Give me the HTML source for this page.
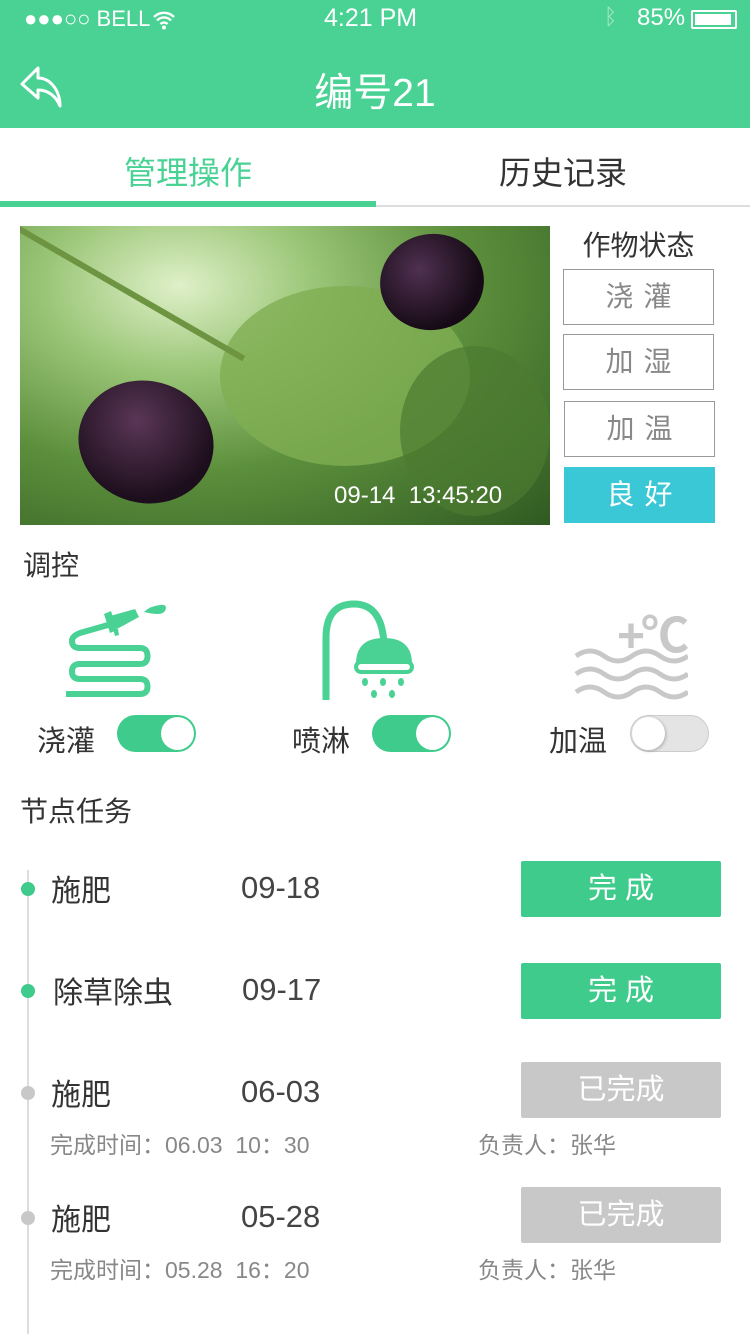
<!DOCTYPE html>
<html><head><meta charset="utf-8"><style>
*{margin:0;padding:0;box-sizing:border-box}
body{width:750px;height:1334px;background:#fff;position:relative;overflow:hidden;font-family:"Liberation Sans","Noto Sans CJK SC",sans-serif;color:#333}
.a{position:absolute;white-space:nowrap}
.hdr{position:absolute;left:0;top:0;width:750px;height:128px;background:#4ad295}
.btn{position:absolute;border:1px solid #999;color:#888;font-size:28px;text-align:center;letter-spacing:10px;text-indent:10px}
.tg{position:absolute;width:79px;height:37px;border-radius:19px;background:#3ecb8b}
.tg i{position:absolute;top:2px;width:33px;height:33px;border-radius:50%;background:#fff}
.gb{position:absolute;left:521px;width:200px;height:56px;background:#3ecb8b;color:#fff;font-size:29px;text-align:center;line-height:56px;letter-spacing:8px;text-indent:8px;border-radius:2px}
.gr{background:#c8c8c8;letter-spacing:0;text-indent:0}
.dot{position:absolute;left:21px;width:14px;height:14px;border-radius:50%}
.dt{font-size:31px;color:#444}
</style></head><body>
<div class="hdr"></div>
<div class="a" style="left:24px;top:6px;color:#fff;font-size:22px">●●●○○ BELL</div>
<svg class="a" style="left:152px;top:10px" width="24" height="20" viewBox="0 0 24 20"><path d="M2 7a14 14 0 0 1 20 0M5 10.5a9.5 9.5 0 0 1 14 0M8.5 14a5 5 0 0 1 7 0" stroke="#fff" stroke-width="2.4" fill="none"/><circle cx="12" cy="17.5" r="2" fill="#fff"/></svg>
<div class="a" style="left:324px;top:4px;color:#fff;font-size:25px">4:21 PM</div>
<div class="a" style="left:604px;top:4px;color:#a8e8c8;font-size:22px">ᛒ</div>
<div class="a" style="left:637px;top:4px;color:#fff;font-size:24px">85%</div>
<div class="a" style="left:691px;top:10px;width:46px;height:19px;border:2px solid #fff;border-radius:2px"><div style="margin:2px;width:36px;height:11px;background:#fff"></div></div>
<svg class="a" style="left:20px;top:66px" width="42" height="42" viewBox="0 0 42 42"><path d="M18 2 L2 18 L18 32 V24 C28 24 36 30 40 40 C40 24 30 12 18 12 Z" stroke="#fff" stroke-width="3" fill="none" stroke-linejoin="round"/></svg>
<div class="a" style="left:0;width:750px;top:62px;text-align:center;color:#fff;font-size:39px">编号21</div>
<div class="a" style="left:0;width:376px;top:148px;text-align:center;color:#4ad295;font-size:32px">管理操作</div>
<div class="a" style="left:376px;width:374px;top:148px;text-align:center;color:#333;font-size:32px">历史记录</div>
<div class="a" style="left:0;top:201px;width:376px;height:6px;background:#4ad295"></div>
<div class="a" style="left:376px;top:205px;width:374px;height:2px;background:#ddd"></div>
<div class="a" style="left:20px;top:226px;width:530px;height:299px;overflow:hidden;background:radial-gradient(ellipse at 30% 20%,#dff0c8 0,#9cc779 25%,#5c8f3c 55%,#2f5a22 100%)">
<div class="a" style="left:200px;top:60px;width:250px;height:180px;border-radius:50%;background:#7fae52;opacity:.8"></div>
<div class="a" style="left:380px;top:120px;width:150px;height:170px;border-radius:50%;background:#4b7a30;opacity:.7"></div>
<div class="a" style="left:0;top:0;width:260px;height:6px;background:#6d9441;transform:rotate(30deg);transform-origin:0 0"></div>
<div class="a" style="left:58px;top:155px;width:136px;height:122px;border-radius:50%;background:radial-gradient(ellipse at 40% 35%,#5a3656,#1c0e1c 70%);transform:rotate(15deg)"></div>
<div class="a" style="left:360px;top:8px;width:104px;height:96px;border-radius:50%;background:radial-gradient(ellipse at 40% 35%,#4f3050,#150a15 70%);transform:rotate(-10deg)"></div>
<div class="a" style="left:314px;top:256px;color:#fff;font-size:24px">09-14&nbsp; 13:45:20</div>
</div>
<div class="a" style="left:563px;width:151px;top:224px;text-align:center;font-size:28px">作物状态</div>
<div class="btn" style="left:563px;top:269px;width:151px;height:56px;line-height:54px">浇灌</div>
<div class="btn" style="left:563px;top:334px;width:151px;height:56px;line-height:54px">加湿</div>
<div class="btn" style="left:564px;top:401px;width:151px;height:56px;line-height:54px">加温</div>
<div class="btn" style="left:564px;top:467px;width:151px;height:56px;line-height:56px;background:#3bc8d6;border:none;color:#fff">良好</div>
<div class="a" style="left:23px;top:544px;font-size:28px">调控</div>
<svg class="a" style="left:0;top:0" width="200" height="720" viewBox="0 0 200 720">
<path d="M108 625 L80 633 Q72 636 72 641 Q72 648 80 648 H140 Q147.5 648 147.5 656 Q147.5 664 140 664 H80 Q72 664 72 671.5 Q72 679 80 679 H140 Q147.5 679 147.5 686.5 Q147.5 694 140 694 H66" fill="none" stroke="#4ad295" stroke-width="6"/>
<path d="M104 614 L111 611 L117 630 L110 633 Z" fill="#4ad295"/>
<path d="M110 616 L135 609 L139 617 L117 629 Z" fill="#4ad295"/>
<path d="M113 629 L118 629 L119 635 L115 636 Z" fill="#4ad295"/>
<path d="M144 612 Q150 606 160 605 Q166 604 166 608 Q165 614 158 614 Q152 614 144 612Z" fill="#4ad295"/>
</svg>
<svg class="a" style="left:320px;top:598px" width="108" height="104" viewBox="0 0 108 104"><path d="M6 102 V40 Q6 6 34 6 Q62 6 64 46" fill="none" stroke="#4ad295" stroke-width="7"/><path d="M36 66 Q36 40 64 40 Q92 40 92 66 Z" fill="#4ad295"/><rect x="36" y="64" width="56" height="10" rx="5" fill="none" stroke="#4ad295" stroke-width="4"/><g fill="#4ad295"><ellipse cx="45" cy="84" rx="3" ry="4"/><ellipse cx="63" cy="84" rx="3" ry="4"/><ellipse cx="81" cy="84" rx="3" ry="4"/><ellipse cx="54" cy="96" rx="3" ry="4"/><ellipse cx="72" cy="96" rx="3" ry="4"/></g></svg>
<div class="a" style="left:617px;top:596px;color:#c8c8c8;font-size:48px;font-weight:bold;letter-spacing:-4px">+℃</div>
<svg class="a" style="left:574px;top:648px" width="114" height="52" viewBox="0 0 114 52"><g fill="none" stroke="#c8c8c8" stroke-width="5"><path d="M2 8 Q16 -2 30 8 T58 8 T86 8 T114 8"/><path d="M2 26 Q16 16 30 26 T58 26 T86 26 T114 26"/><path d="M2 44 Q16 34 30 44 T58 44 T86 44 T114 44"/></g></svg>
<div class="a" style="left:37px;top:718px;font-size:29px">浇灌</div>
<div class="tg" style="left:117px;top:715px"><i style="right:2px"></i></div>
<div class="a" style="left:292px;top:718px;font-size:29px">喷淋</div>
<div class="tg" style="left:372px;top:715px"><i style="right:2px"></i></div>
<div class="a" style="left:549px;top:718px;font-size:29px">加温</div>
<div class="tg" style="left:630px;top:715px;background:#e4e4e4;border:1px solid #ccc"><i style="left:1px;top:1px;box-shadow:1px 1px 3px rgba(0,0,0,.25)"></i></div>
<div class="a" style="left:20px;top:790px;font-size:28px">节点任务</div>
<div class="a" style="left:27px;top:870px;width:2px;height:464px;background:#ddd"></div>
<div class="dot" style="top:882px;background:#3ecb8b"></div>
<div class="a" style="left:51px;top:866px;font-size:30px">施肥</div>
<div class="a dt" style="left:241px;top:870px">09-18</div>
<div class="gb" style="top:861px">完成</div>
<div class="dot" style="top:984px;background:#3ecb8b"></div>
<div class="a" style="left:53px;top:968px;font-size:30px">除草除虫</div>
<div class="a dt" style="left:242px;top:972px">09-17</div>
<div class="gb" style="top:963px">完成</div>
<div class="dot" style="top:1086px;background:#c8c8c8"></div>
<div class="a" style="left:51px;top:1070px;font-size:30px">施肥</div>
<div class="a dt" style="left:241px;top:1074px">06-03</div>
<div class="gb gr" style="top:1062px">已完成</div>
<div class="a" style="left:50px;top:1126px;font-size:23px;color:#888">完成时间：06.03&nbsp; 10：30</div>
<div class="a" style="left:478px;top:1126px;font-size:23px;color:#888">负责人：张华</div>
<div class="dot" style="top:1211px;background:#c8c8c8"></div>
<div class="a" style="left:51px;top:1195px;font-size:30px">施肥</div>
<div class="a dt" style="left:241px;top:1199px">05-28</div>
<div class="gb gr" style="top:1187px">已完成</div>
<div class="a" style="left:50px;top:1251px;font-size:23px;color:#888">完成时间：05.28&nbsp; 16：20</div>
<div class="a" style="left:478px;top:1251px;font-size:23px;color:#888">负责人：张华</div>
</body></html>
